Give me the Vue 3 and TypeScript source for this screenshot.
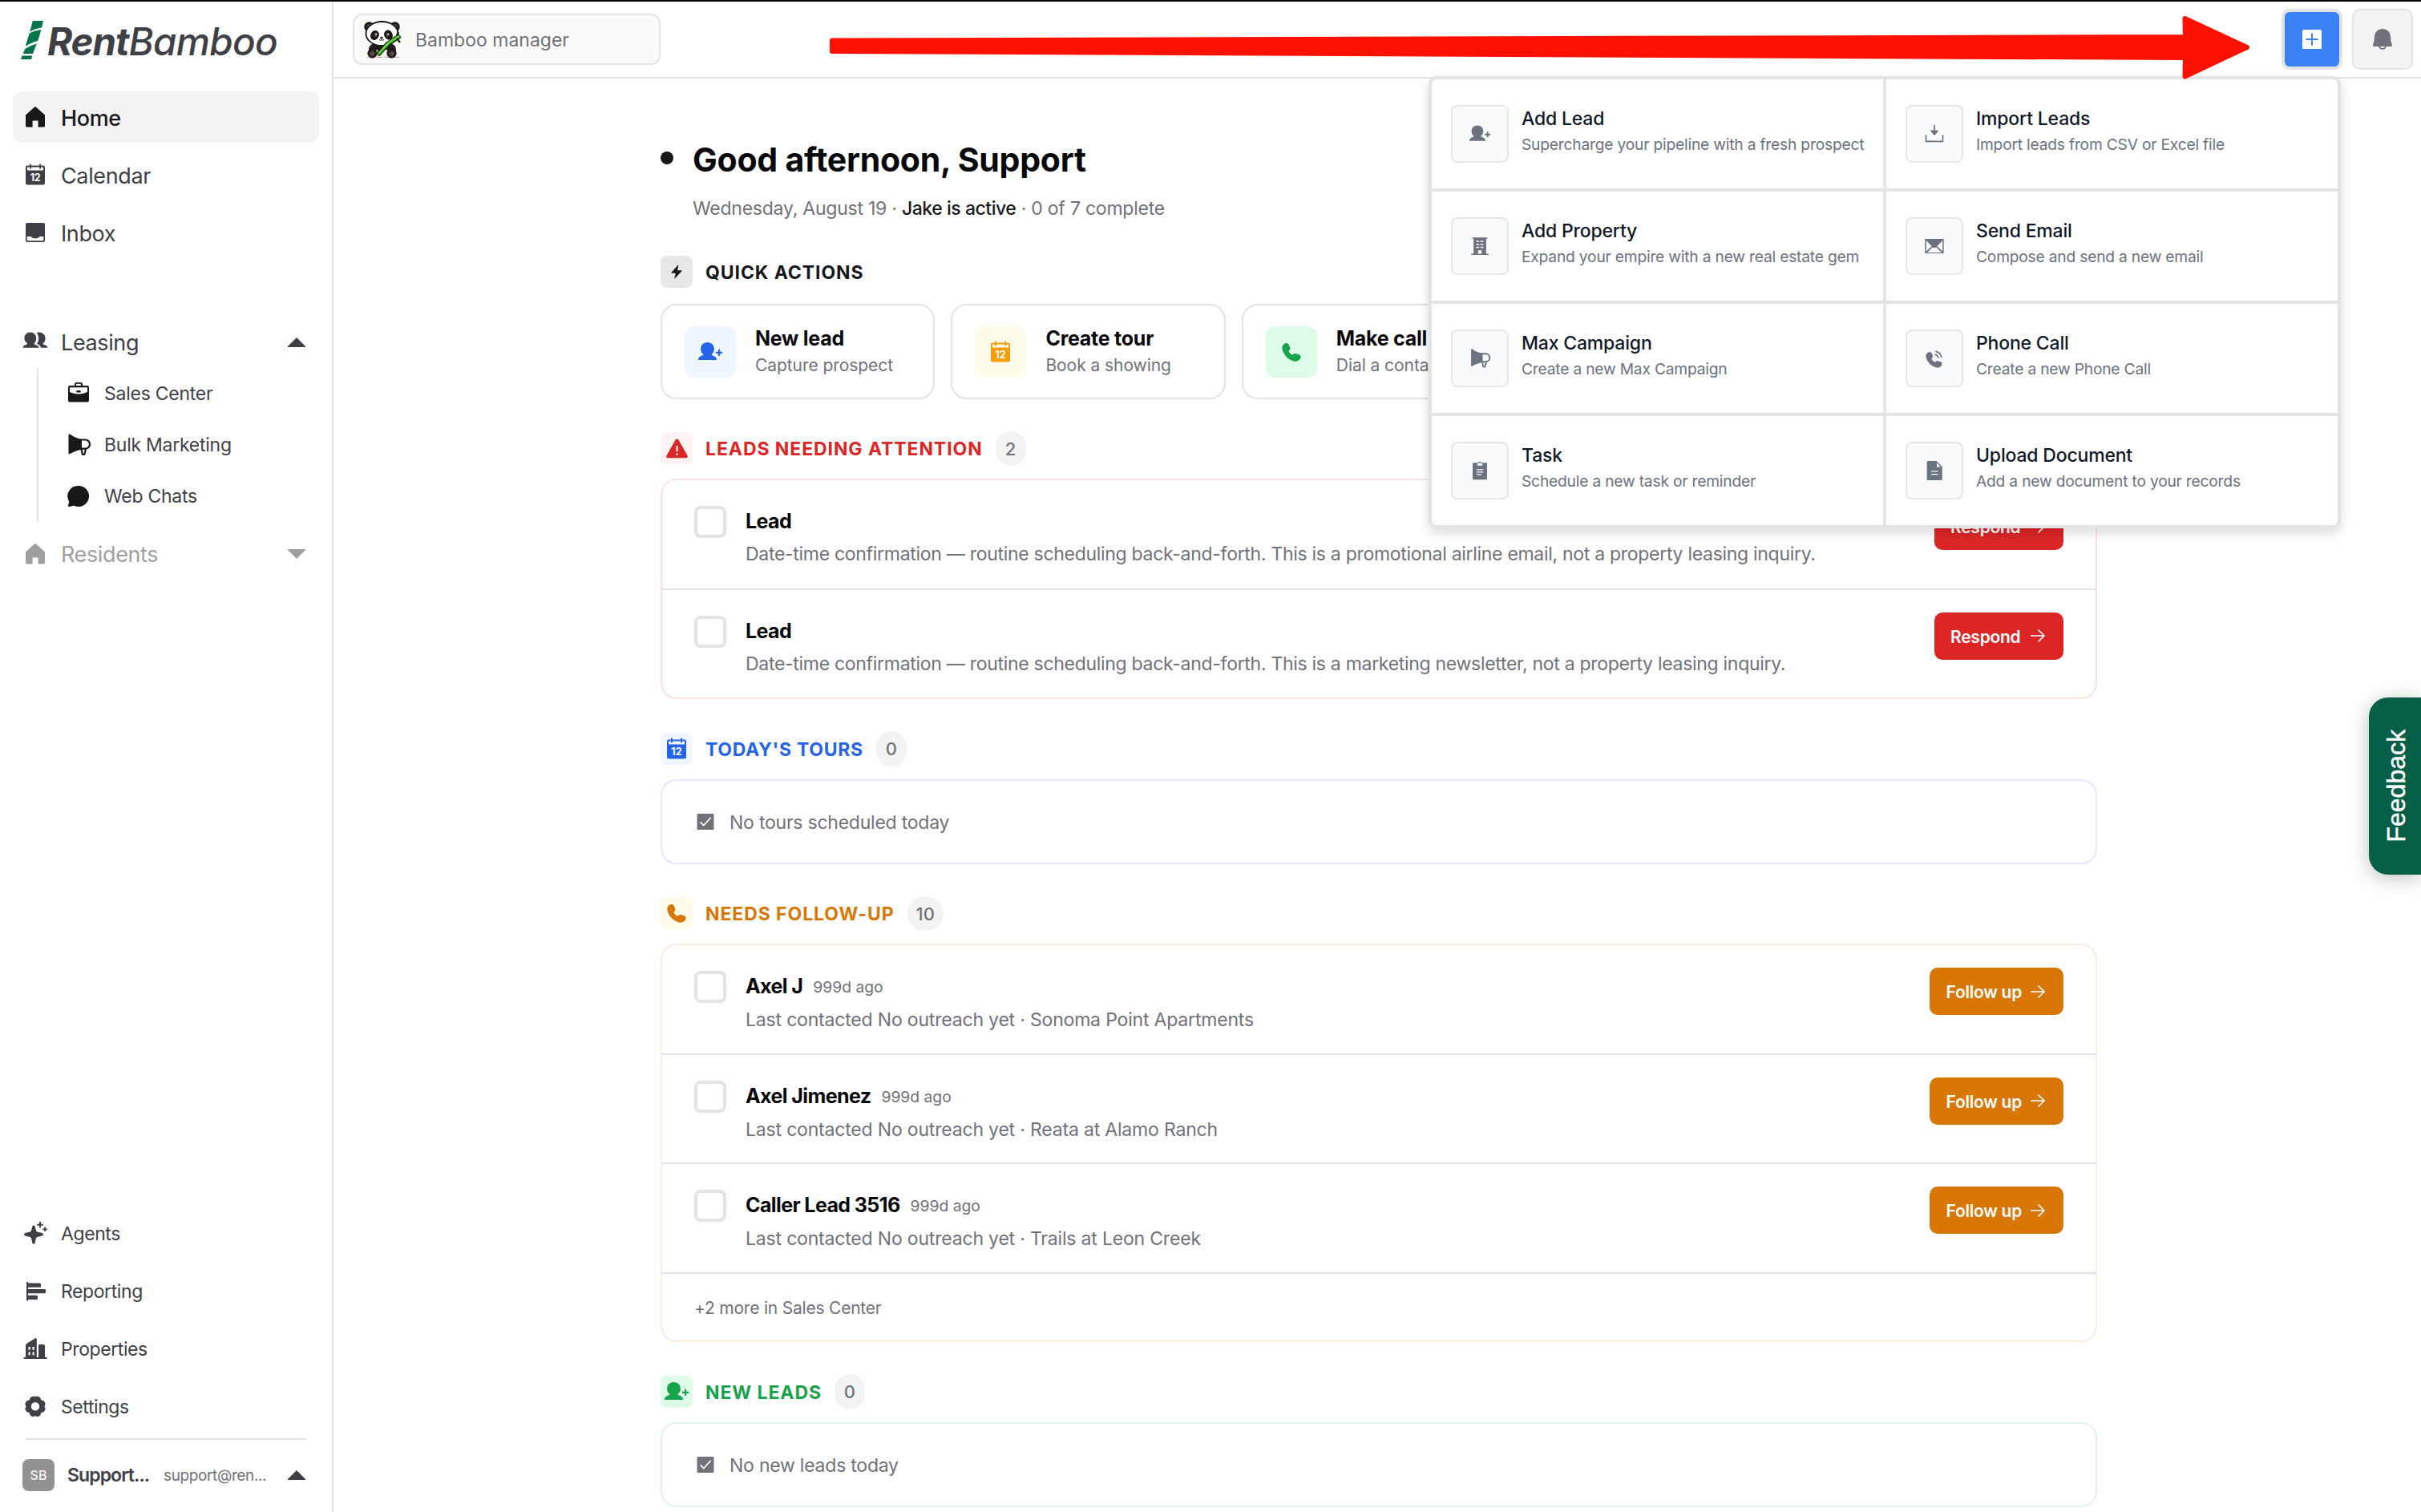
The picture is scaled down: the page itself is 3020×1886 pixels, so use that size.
<script setup lang="ts">
interface NavItem { label: string; icon: string }
interface Lead { name: string; time?: string; note: string }
interface Section {
  title: string
  icon: string
  tone: 'red' | 'blue' | 'amber' | 'green'
  count: number
  rows: Lead[]
  action?: string
  empty?: string
  more?: string
}

const phone =
  '<path d="M3 2C5 .2 8 .6 9 3.400l1.200 3C10.800 8 10.300 9 9.200 10c-.8.8-.6 1.600 0 2.400 1.100 1.500 1.800 2.200 3 2.900.8.5 1.500.2 2.100-.5.9-.9 2-1.100 3.300-.7l3.900 1.200c2.500.9 2.700 3 1.300 5.300-2 3.400-6.300 3.900-10.800 1.900C5.500 19.500 1 13 .3 7.500 0 5 1.200 3.200 3 2z"/>'

const icons: Record<string, string> = {
  home: '<path d="M14.500 4q1.500-1.300 3 0L28 13.400V27a1.600 1.600 0 0 1-1.600 1.600H19.600v-8h-7v8H5.600A1.600 1.600 0 0 1 4 27V13.400z"/>',
  calendar:
    '<path fill-rule="evenodd" d="M6 4.500h3V2.500h1.800v2h10.400v-2H23v2h3a2 2 0 0 1 2 2V26.500a2 2 0 0 1-2 2H6a2 2 0 0 1-2-2V6.500a2 2 0 0 1 2-2zM6 6.500v4h20v-4h-3v2h-1.800v-2H10.800v2H9v-2z"/><text x="16" y="24.300" text-anchor="middle" font-size="12.500" font-weight="700" fill="#fff" font-family="Inter, sans-serif">12</text>',
  inbox:
    '<path fill-rule="evenodd" d="M6 4h20a2 2 0 0 1 2 2v20a2 2 0 0 1-2 2H6a2 2 0 0 1-2-2V6a2 2 0 0 1 2-2zm-.3 17v4.500c0 .5.3.8.8.8h19c.5 0 .8-.3.8-.8V21h-5c-.8 3.200-9.800 3.200-10.600 0z"/>',
  people:
    '<path d="M9.700 3.500c4.600 0 7.500 3.300 7.500 7.600 0 3-1 4.600-2.400 6v1.400c4 1.400 5.400 2 5.700 4.300H.6c.3-2.300 1.400-2.900 5.300-4.300v-1.400c-2-1.400-3.500-3-3.500-6 0-4.300 2.700-7.600 7.300-7.600z"/><path d="M17.800 3.900c5.600-1.500 10.700 1.500 10.700 7 0 3-1 5-2.800 6.400v1.200c4 1.400 5.400 2 5.700 4.300h-8.300c-.6-2.500-2.500-3.800-5-4.800 2-3 3.500-8.500-.3-14.100z"/>',
  addperson:
    '<path d="M12.500 4c5.200 0 8.400 3.600 8.400 8.300 0 3.200-1.400 5.400-3.200 6.700v1c4.400 1.500 6 2.800 6.400 6H.9c.4-3.200 2-4.500 6.400-6v-1c-1.800-1.300-3.200-3.500-3.200-6.700C4.100 7.600 7.300 4 12.500 4z"/><path d="M26 12.800h2.100v3h3v2.100h-3v3H26v-3h-3v-2.100h3z"/>',
  briefcase:
    '<path fill-rule="evenodd" d="M11 6V4.500C11 2.800 12 2 13.500 2h5C20 2 21 2.800 21 4.500V6h6a2 2 0 0 1 2 2v16.500a2 2 0 0 1-2 2H5a2 2 0 0 1-2-2V8a2 2 0 0 1 2-2zm2 0h6V4.500q0-.7-.7-.7h-4.600q-.7 0-.7.7zM5 8.200v5.500c6 3.600 16 3.600 22 0V8.200z"/><rect x="13.200" y="12" width="5.600" height="2.400" rx="1.200"/>',
  megaphone:
    '<path d="M3.500 3.600c0-1 1-1.300 1.900-.8 4.800 3.200 9 5.200 14.600 5.900v13c-5.600.7-9.800 2.700-14.600 5.300-.9.500-1.900.2-1.900-.8z"/><path d="M19 9.500h5.400a5.600 5.600 0 0 1 0 11.200H19M19.600 21l1.100 6.200c.2 1.200 2.600 1.200 2.900 0L25 21" fill="none" stroke="currentColor" stroke-width="2.200"/>',
  chat: '<path d="M16 3a13 13 0 1 1-5.600 24.700L4 29c-1 .1-1.400-.8-1-1.500l1.200-4.800A13 13 0 0 1 16 3z"/>',
  sparkle:
    '<path d="M14 5.500c1.800 0 1.800 1.500 2.600 5 .5 2.500 1 3 3.400 3.500 4 .9 6 .9 6 2.700s-2 1.800-6 2.700c-2.400.5-2.900 1-3.400 3.400-.8 4-.8 6-2.600 6s-1.800-2-2.600-6c-.5-2.400-1-2.900-3.400-3.400-4-.9-6-.9-6-2.700s2-1.800 6-2.700c2.400-.5 2.900-1 3.400-3.500.8-3.500.8-5 2.600-5z"/><path d="M21 1h2v2.700h2.700v2H23v2.800h-2V5.700h-2.700v-2H21zM27.200 7.500h1.800v1.900h1.900v1.800H29v1.900h-1.800v-1.900h-1.900V9.400h1.900z"/>',
  bars: '<path d="M5 4h2v1.500h14.500a1.500 1.500 0 0 1 1.500 1.500v2.300a1.500 1.500 0 0 1-1.500 1.500H7v2.200h20.500A1.500 1.500 0 0 1 29 14.500v2.300a1.500 1.500 0 0 1-1.500 1.500H7v2.400h10.500a1.500 1.500 0 0 1 1.500 1.500v2.300a1.500 1.500 0 0 1-1.500 1.500H7V27.500H5z"/>',
  properties:
    '<path fill-rule="evenodd" d="M2 26h2V11.200q0-1.400 1.200-2.200L15.600 2.500q2.200-1.200 2.200 1.200V26H20V10h6q2 0 2 2v14h2.600v1.900H1.600V26zM7.500 13v3.800h2.200V13zm5 0v3.800h2.200V13zm-5 6.500v3.800h2.200v-3.800zm5 0v3.800h2.200v-3.800z"/>',
  gear: '<path fill-rule="evenodd" d="M13 2.700c1.200-.4 2 .3 3 .9 1-.6 1.800-1.300 3-.9 1.800.5 3.200 1 3.600 2.500.3 1.200.3 1.500.9 2.100s1 .5 2.200.8c1.400.4 2.100 1.800 2.700 3.600.5 1.400-.3 2.300-1 3.600.7 1.300 1.500 2.200 1 3.600-.6 1.800-1.300 3.200-2.700 3.600-1.200.3-1.600.2-2.200.8s-.6.9-.9 2.100c-.4 1.500-1.800 2-3.600 2.500-1.200.4-2-.3-3-.9-1 .6-1.800 1.300-3 .9-1.800-.5-3.200-1-3.600-2.500-.3-1.200-.3-1.500-.9-2.100s-1-.5-2.200-.8c-1.400-.4-2.100-1.800-2.700-3.600-.5-1.400.3-2.300 1-3.600-.7-1.300-1.500-2.200-1-3.600.6-1.800 1.300-3.200 2.700-3.600 1.200-.3 1.600-.2 2.200-.8s.6-.9.9-2.100c.4-1.500 1.800-2 3.600-2.500zM16 10a5.200 5.200 0 1 0 0 10.400A5.200 5.200 0 0 0 16 10z"/>',
  bolt: '<path d="M19.500 1.500 5.500 17.500q-.8 1.200.8 1.200H14L11.500 30.500 26.500 14.500q.8-1.200-.8-1.200H18z"/>',
  warn: '<path fill-rule="evenodd" d="M14 3.800c.9-1.500 3.100-1.500 4 0L30.500 26c.8 1.500 0 3-1.700 3H3.200c-1.700 0-2.500-1.500-1.700-3zM14.800 12v8h2.400v-8zm0 10.500V25h2.400v-2.500z"/>',
  phone: `<g transform="translate(4 4)">${phone}</g>`,
  phonewave: `<g transform="translate(1.500 4.200) scale(1.150)">${phone}</g><path d="M17.500 9.500c2.500.8 4.300 2.500 5 5M18.500 4.500c5 1 8.300 4.500 9.300 9.500" fill="none" stroke="currentColor" stroke-width="2.200" stroke-linecap="round"/>`,
  check:
    '<rect x="2" y="2.800" width="28" height="26.400" rx="1.500"/><path d="m7.500 16.500 5.500 5.500L25 9" fill="none" stroke="#fff" stroke-width="2.200"/>',
  building:
    '<path fill-rule="evenodd" d="M3.500 1.500h25v2H26.500V28.500H30.500v2H1.500v-2H5.500V3.500h-2zM10 7v2h4.800V7zm7 0v2h4.800V7zm-7 5v2h4.800v-2zm7 0v2h4.800v-2zm-7 5v2h4.800v-2zm7 0v2h4.800v-2zM13 23v5.500h6V23z"/>',
  task: '<path fill-rule="evenodd" d="M5.500 3h5.200C11.500 5.200 13 1 16 1s4.500 4.200 5.300 2h5.200q1.500 0 1.500 1.500v25q0 1.500-1.500 1.500h-21Q4 31 4 29.500v-25Q4 3 5.500 3zM11.500 7.500h9C20.500 4.500 18.500 3 16 3s-4.500 1.500-4.500 4.500zM10.500 13.500v1.800h11v-1.800zm0 4v1.800h11v-1.800zm0 4v1.800h8v-1.800z"/>',
  download:
    '<path d="M2 17.500V28.500h28V17.500" fill="none" stroke="currentColor" stroke-width="2.200"/><path d="M14.900 1h2.200v9h4.700q1.500.2.600 1.400L17 17.500q-1 1-2 0L9.600 11.400q-.9-1.200.6-1.400h4.700z"/>',
  mail: '<path fill-rule="evenodd" d="M.5 4h31v24h-31zM2.500 7v17.500l9-8.500zm27 0-9 9 9 8.500zM13 17.500 4 26.500h24l-9-9q-3 2.500-6 0z"/>',
  doc: '<path fill-rule="evenodd" d="M5 0H19.500l9.500 9.500V30.500q0 1.500-1.500 1.500H5Q3.500 32 3.500 30.500v-29Q3.500 0 5 0zM20 3v7h6.500zM10.500 16.200v1.800h11.500v-1.800zm0 5v1.800h11.500v-1.800z"/>',
}

const primary: NavItem[] = [
  { label: 'Home', icon: 'home' },
  { label: 'Calendar', icon: 'calendar' },
  { label: 'Inbox', icon: 'inbox' },
]
const leasing: NavItem[] = [
  { label: 'Sales Center', icon: 'briefcase' },
  { label: 'Bulk Marketing', icon: 'megaphone' },
  { label: 'Web Chats', icon: 'chat' },
]
const secondary: NavItem[] = [
  { label: 'Agents', icon: 'sparkle' },
  { label: 'Reporting', icon: 'bars' },
  { label: 'Properties', icon: 'properties' },
  { label: 'Settings', icon: 'gear' },
]
const quick = [
  { title: 'New lead', sub: 'Capture prospect', icon: 'addperson', tone: 'blue' },
  { title: 'Create tour', sub: 'Book a showing', icon: 'calendar', tone: 'yellow' },
  { title: 'Make call', sub: 'Dial a contact', icon: 'phone', tone: 'green' },
]
const menu = [
  { title: 'Add Lead', sub: 'Supercharge your pipeline with a fresh prospect', icon: 'addperson', wide: true },
  { title: 'Import Leads', sub: 'Import leads from CSV or Excel file', icon: 'download' },
  { title: 'Add Property', sub: 'Expand your empire with a new real estate gem', icon: 'building' },
  { title: 'Send Email', sub: 'Compose and send a new email', icon: 'mail' },
  { title: 'Max Campaign', sub: 'Create a new Max Campaign', icon: 'megaphone', wide: true },
  { title: 'Phone Call', sub: 'Create a new Phone Call', icon: 'phonewave' },
  { title: 'Task', sub: 'Schedule a new task or reminder', icon: 'task' },
  { title: 'Upload Document', sub: 'Add a new document to your records', icon: 'doc' },
]
const sections: Section[] = [
  {
    title: 'LEADS NEEDING ATTENTION', icon: 'warn', tone: 'red', count: 2, action: 'Respond',
    rows: [
      { name: 'Lead', note: 'Date-time confirmation — routine scheduling back-and-forth. This is a promotional airline email, not a property leasing inquiry.' },
      { name: 'Lead', note: 'Date-time confirmation — routine scheduling back-and-forth. This is a marketing newsletter, not a property leasing inquiry.' },
    ],
  },
  { title: "TODAY'S TOURS", icon: 'calendar', tone: 'blue', count: 0, rows: [], empty: 'No tours scheduled today' },
  {
    title: 'NEEDS FOLLOW-UP', icon: 'phone', tone: 'amber', count: 10, action: 'Follow up', more: '+2 more in Sales Center',
    rows: [
      { name: 'Axel J', time: '999d ago', note: 'Last contacted No outreach yet · Sonoma Point Apartments' },
      { name: 'Axel Jimenez', time: '999d ago', note: 'Last contacted No outreach yet · Reata at Alamo Ranch' },
      { name: 'Caller Lead 3516', time: '999d ago', note: 'Last contacted No outreach yet · Trails at Leon Creek' },
    ],
  },
  { title: 'NEW LEADS', icon: 'addperson', tone: 'green', count: 0, rows: [], empty: 'No new leads today' },
]
</script>

<template>
  <div class="app">
    <aside class="sidebar">
      <div class="logo">
        <svg class="stalk" viewBox="0 0 28 48">
          <path d="M14.800 0H28L26 8.500Q18 9.500 11.300 13.700z" />
          <path d="M10.600 15.800Q17 12 25.300 11L21.300 25Q12 27.500 5.600 31.800z" />
          <path d="M5.200 35Q12 30.500 19.800 28.500L15 41H2.800z" />
          <path d="M1.500 43.500h12.700L13 48H0z" />
        </svg>
        <span class="wordmark"><b>Rent</b><span>Bamboo</span></span>
      </div>

      <nav class="nav">
        <a v-for="(n, i) in primary" :key="n.label" class="item" :class="{ active: i === 0 }">
          <svg class="ico32" viewBox="0 0 32 32" v-html="icons[n.icon]" /><span class="label">{{ n.label }}</span>
        </a>
      </nav>

      <nav class="nav group">
        <a class="item">
          <svg class="ico32" viewBox="0 0 32 32" v-html="icons.people" /><span>Leasing</span>
          <svg class="chev" viewBox="0 0 22 12"><path d="M11 0 22 11V12H0V11z" /></svg>
        </a>
        <div class="sub">
          <a v-for="n in leasing" :key="n.label" class="subitem">
            <svg class="ico32" viewBox="0 0 32 32" v-html="icons[n.icon]" />{{ n.label }}
          </a>
        </div>
        <a class="item muted">
          <svg class="ico32" viewBox="0 0 32 32" v-html="icons.home" /><span>Residents</span>
          <svg class="chev" viewBox="0 0 22 12"><path d="M11 12 0 1V0H22V1z" /></svg>
        </a>
      </nav>

      <nav class="nav bottom">
        <a v-for="n in secondary" :key="n.label" class="item small">
          <svg class="ico32" viewBox="0 0 32 32" v-html="icons[n.icon]" />{{ n.label }}
        </a>
      </nav>
      <div class="user">
        <span class="avatar">SB</span>
        <span class="uname">Support...</span>
        <span class="email">support@ren...</span>
        <svg class="chev" viewBox="0 0 22 12"><path d="M11 0 22 11V12H0V11z" /></svg>
      </div>
    </aside>

    <div class="page">
      <header class="topbar">
        <div class="manager">
          <svg class="panda" viewBox="0 0 48 48">
            <path d="M4 46.500h40" stroke="#c9a9a4" stroke-width="1" stroke-dasharray="8 3" />
            <circle cx="6.500" cy="8.500" r="6.200" fill="#1c1715" /><circle cx="38.500" cy="8.500" r="6.200" fill="#1c1715" />
            <circle cx="6.500" cy="8.500" r="3.400" fill="#4b403d" /><circle cx="38.500" cy="8.500" r="3.400" fill="#4b403d" />
            <path d="M6 37c0-7 6-9 17-9s17 2 17 9l-1 9H7z" fill="#241d1b" />
            <path d="M15 37h14l2 9H14z" fill="#f4f1ee" />
            <path d="M20 3l2.500-2.500L24 2l2-.5-1 2.500z" fill="#1c1715" />
            <ellipse cx="22.500" cy="17" rx="20" ry="15" fill="#fff" stroke="#1c1715" stroke-width="1.800" />
            <ellipse cx="13.500" cy="19" rx="5.200" ry="6.200" transform="rotate(30 13.500 19)" fill="#1c1715" />
            <ellipse cx="30.500" cy="18.500" rx="5.200" ry="6.200" transform="rotate(-30 30.500 18.500)" fill="#1c1715" />
            <circle cx="14.500" cy="18.500" r="2.300" fill="#4a4645" /><circle cx="29.500" cy="18.500" r="2.300" fill="#4a4645" />
            <circle cx="15.200" cy="17.500" r="1" fill="#fff" /><circle cx="30.200" cy="17.500" r="1" fill="#fff" />
            <ellipse cx="22" cy="22.300" rx="1.900" ry="1.200" fill="#1c1715" />
            <path d="M19 24.500q1.500 1.700 3 0 1.500 1.700 3 0" fill="none" stroke="#1c1715" />
            <circle cx="10.500" cy="41.500" r="5.600" fill="#2b2321" stroke="#110d0c" /><circle cx="34.500" cy="41.500" r="5.600" fill="#2b2321" stroke="#110d0c" />
            <circle cx="10.500" cy="42" r="2.800" fill="#5a4d49" /><circle cx="34.500" cy="42" r="2.800" fill="#5a4d49" />
            <path d="M17 43.500 30 29.500 45 19.500" fill="none" stroke="#14240f" stroke-width="6" />
            <path d="M17.500 43 30.500 29 44.500 19.800" fill="none" stroke="#3fae2c" stroke-width="3.600" />
            <path d="M19 40.500 31 28 43 20" fill="none" stroke="#8be04f" stroke-width="1.200" />
            <path d="M41 23l4 5M41 19l2-4" stroke="#14240f" stroke-width="2.400" />
            <path d="M13 34q5-2 10 1l-4 4q-4-3-7-2z" fill="#1c1715" />
          </svg>
          <span class="label">Bamboo manager</span>
        </div>
        <div class="tools">
          <button class="add">
            <svg viewBox="0 0 24 24"><rect width="24" height="24" rx="1.500" fill="#fff" /><path d="M4.500 12h15M12 4.500v15" stroke="#3b82f6" stroke-width="2" /></svg>
          </button>
          <button class="bell">
            <svg viewBox="0 0 24 26">
              <path d="M12 0C6.500 0 2.500 3.800 2 9.500L1.600 15 0 20q-.2 2 1.500 2h21q1.700 0 1.500-2l-1.600-5L22 9.500C21.500 3.800 17.500 0 12 0z" />
              <path d="M8 22q.8 3 4 3t4-3" fill="none" stroke="currentColor" stroke-width="1.600" />
            </svg>
          </button>
        </div>
      </header>

      <main class="content">
        <div class="greeting">
          <span class="dot" />
          <div>
            <h1>Good afternoon, Support</h1>
            <p>Wednesday, August 19 · <strong>Jake is active</strong> · 0 of 7 complete</p>
          </div>
        </div>

        <div class="head quickhead">
          <span class="badge dark"><svg class="ico" viewBox="0 0 32 32" v-html="icons.bolt" /></span>
          <h2>QUICK ACTIONS</h2>
        </div>
        <div class="quick">
          <div v-for="q in quick" :key="q.title" class="qcard">
            <span class="qicon" :class="'q-' + q.tone"><svg class="ico32" viewBox="0 0 32 32" v-html="icons[q.icon]" /></span>
            <div><h3>{{ q.title }}</h3><p>{{ q.sub }}</p></div>
          </div>
        </div>

        <section v-for="s in sections" :key="s.title" :class="s.tone">
          <div class="head">
            <span class="badge"><svg :class="s.icon === 'warn' ? 'ico28' : 'ico32'" viewBox="0 0 32 32" v-html="icons[s.icon]" /></span>
            <h2>{{ s.title }}</h2>
            <span class="count">{{ s.count }}</span>
          </div>
          <div class="card">
            <div v-for="(r, i) in s.rows" :key="i" class="row">
              <span class="box" />
              <div class="text">
                <h3>{{ r.name }}<small v-if="r.time">{{ r.time }}</small></h3>
                <p>{{ r.note }}</p>
              </div>
              <button class="cta">
                <span class="label">{{ s.action }}</span>
                <svg viewBox="0 0 20 18"><path d="M1 9h17M10.500 1.500 18 9l-7.500 7.500" fill="none" stroke="currentColor" stroke-width="1.600" /></svg>
              </button>
            </div>
            <div v-if="s.more" class="more">{{ s.more }}</div>
            <div v-if="s.empty" class="empty"><svg viewBox="0 0 32 32" v-html="icons.check" /><span class="label">{{ s.empty }}</span></div>
          </div>
        </section>
      </main>
    </div>

    <div class="menu">
      <div v-for="m in menu" :key="m.title" class="cell">
        <span class="micon"><svg :class="{ wide: m.wide }" viewBox="0 0 32 32" v-html="icons[m.icon]" /></span>
        <div><h4>{{ m.title }}</h4><p>{{ m.sub }}</p></div>
      </div>
    </div>

    <div class="feedback"><span>Feedback</span></div>

    <svg class="arrow" viewBox="0 0 1780 84">
      <path d="M6 35.500 1694 31 1693.500 8 1771 44 1693.500 80.500 1694 57 6 49z" stroke-width="6" stroke-linejoin="round" />
    </svg>
  </div>
</template>

<style>
html, body { background: #fff; overflow: hidden; }
</style>
<style scoped>
* { box-sizing: border-box; }
h1, h2, h3, h4, p { margin: 0; }
svg { display: block; flex: none; fill: currentColor; }
button { font: inherit; border: 0; padding: 0; }
.app {
  position: relative; display: flex; width: 3020px; height: 1886px; overflow: hidden;
  border-top: 2px solid #000; background: #fff; color: #3f3f46;
  font-family: Inter, "Liberation Sans", sans-serif; font-size: 23px;
}
.ico { width: 20px; height: 24px; }
.ico28 { width: 29px; height: 29px; }
.ico32 { width: 32px; height: 32px; }
.label { padding-top: 2px; }

.sidebar { width: 416px; flex: none; display: flex; flex-direction: column; border-right: 2px solid #e4e4e7; }
.logo { display: flex; height: 112px; padding: 24px 0 0 26px; }
.stalk { width: 28px; height: 48px; fill: #05744a; }
.wordmark { margin-left: 5px; font-size: 47.500px; line-height: 51px; font-style: italic; color: #3f3f46; }
.wordmark b { font-weight: 700; letter-spacing: -0.022em; }
.wordmark span { font-weight: 500; letter-spacing: -0.014em; }
.nav { display: flex; flex-direction: column; gap: 8px; padding: 0 16px; }
.item {
  display: flex; align-items: center; gap: 16px; height: 64px; padding: 0 17px 0 12px;
  border-radius: 12px; font-size: 27px; letter-spacing: -0.014em;
}
.item.active { background: #f3f3f3; color: #18181b; font-weight: 500; }
.item.muted { color: #9f9fa0; }
.item.small { font-size: 23px; letter-spacing: -0.018em; }
.chev { width: 22px; height: 12px; margin-left: auto; }
.group { margin-top: 73px; gap: 0; }
.sub { margin: 0 0 8px 30px; padding-left: 34px; border-left: 2px solid #e4e4e7; }
.subitem { display: flex; align-items: center; gap: 16px; height: 64px; letter-spacing: -0.011em; }
.subitem .ico32 { color: #18181b; }
.bottom { margin-top: auto; }
.user {
  display: flex; align-items: center; height: 92px; margin: 7px 32px 0; padding-bottom: 2px;
  border-top: 2px solid #e4e4e7;
}
.avatar {
  width: 40px; height: 40px; margin-left: -4px; border-radius: 8px; background: #929292; color: #f4f4f5;
  font-size: 16px; line-height: 40px; text-align: center; font-weight: 500;
}
.uname { width: 120px; margin-left: 16px; font-weight: 600; letter-spacing: -0.04em; white-space: nowrap; }
.email { font-size: 19px; letter-spacing: -0.02em; color: #71717a; }
.user .chev { margin-right: 1px; }

.page { flex: 1; min-width: 0; display: flex; flex-direction: column; }
.topbar {
  display: flex; align-items: center; justify-content: space-between; height: 96px; flex: none;
  padding: 0 10px 0 24px; border-bottom: 2px solid #e4e4e7;
}
.manager {
  display: flex; align-items: center; gap: 16px; width: 384px; height: 64px; padding-left: 12px;
  border: 2px solid #e4e4e7; border-radius: 12px; background: #fafaf9; color: #71717a;
}
.panda { width: 48px; height: 48px; fill: none; }
.tools { display: flex; gap: 12px; }
.add, .bell { display: flex; align-items: center; justify-content: center; width: 76px; height: 76px; border-radius: 10px; }
.add { background: #3b82f6; border: 4px solid #e4e4e7; }
.add svg { width: 24px; height: 24px; }
.bell { background: #f3f3f3; border: 2px solid #e4e4e4; color: #71717a; }
.bell svg { width: 24px; height: 26px; }

.content { width: 1792px; margin: 0 0 0 408px; }
.greeting { display: flex; padding-top: 75px; height: 221px; }
.dot { width: 16px; height: 16px; margin: 16px 24px 0 0; border-radius: 50%; background: #18181b; }
.greeting h1 { font-size: 41px; line-height: 52px; font-weight: 700; letter-spacing: -0.006em; color: #09090b; }
.greeting p { margin-top: 17px; line-height: 36px; color: #71717a; letter-spacing: -0.010em; }
.greeting strong { font-weight: 500; color: #18181b; letter-spacing: -0.02em; }
.head { display: flex; align-items: center; gap: 16px; height: 43.5px; }
.quickhead { height: 40px; }
.head h2 { padding-top: 2px; font-size: 23px; font-weight: 700; letter-spacing: 0.040em; color: #18181b; }
.badge { display: flex; align-items: center; justify-content: center; width: 40px; height: 40px; border-radius: 8px; }
.badge.dark { background: #e8e8e8; color: #18181b; }
.count {
  min-width: 38px; height: 43.5px; padding: 0 11px; border-radius: 22px; background: #f3f3f3;
  font-size: 22px; line-height: 45px; font-weight: 500; text-align: center; color: #71717a;
}
.quick { display: grid; grid-template-columns: repeat(5, 1fr); gap: 20px; margin-top: 20px; }
.qcard {
  display: flex; align-items: center; gap: 24px; height: 119px; padding: 0 0 0 28px;
  border: 2px solid #e4e4e7; border-radius: 20px; white-space: nowrap;
}
.qicon { display: flex; align-items: center; justify-content: center; width: 64px; height: 64px; border-radius: 12px; }
.q-blue { background: #eff6ff; color: #2563eb; }
.q-yellow { background: #fffbeb; color: #f59e0b; }
.q-green { background: #dcfce7; color: #16a34a; }
.qcard h3 { font-size: 25px; line-height: 34px; font-weight: 700; color: #09090b; letter-spacing: -0.010em; }
.qcard p { font-size: 21px; line-height: 34px; color: #71717a; letter-spacing: -0.003em; }
section { margin-top: 40px; }
.quick + section { margin-top: 39.5px; }
.card { margin-top: 16px; border: 2px solid #eee; border-radius: 20px; }
.red .card { border-color: #fee2e2; }
.blue .card { border-color: #e3e8fd; }
.amber .card { border-color: #fdecdc; }
.green .card { border-color: #e2f3e9; }
.red .badge { background: #fef2f2; }
.blue .badge { background: #eff6ff; }
.amber .badge { background: #fffbeb; }
.green .badge { background: #dcfce7; }
.red h2, .red .badge { color: #dc2626; }
.blue h2, .blue .badge { color: #2563eb; }
.amber h2, .amber .badge { color: #d97706; }
.green h2, .green .badge { color: #16a34a; }
.blue .head h2 { letter-spacing: 0.030em; }
.row h3, .row .cta { color: #09090b; }
.row { display: flex; height: 136.5px; padding: 28px 40px 0; border-bottom: 2px solid #e4e4e7; }
.red .row:last-child { height: 134.5px; border-bottom: 0; }
.box { width: 40px; height: 40px; flex: none; margin-top: 4px; border: 4px solid #e4e4e4; border-radius: 8px; }
.text { flex: 1; margin-left: 24px; padding-top: 1px; white-space: nowrap; }
.text h3 { font-size: 25px; line-height: 44px; font-weight: 700; letter-spacing: -0.024em; }
.text small { margin-left: 13px; font-size: 19.300px; font-weight: 400; color: #71717a; letter-spacing: 0; vertical-align: 1px; }
.text p { line-height: 38px; color: #71717a; letter-spacing: -0.0128em; }
.amber .text p { letter-spacing: -0.008em; }
.row .cta {
  display: flex; align-items: center; justify-content: space-between; height: 59px; min-width: 161px; gap: 10px;
  padding: 0 22px 0 20px; border-radius: 10px; color: #fff; font-size: 21px; font-weight: 600;
  letter-spacing: -0.012em; white-space: nowrap;
}
.cta svg { width: 20px; height: 18px; }
.red .cta { background: #dc2626; }
.amber .cta { background: #d97706; }
.more { height: 83.500px; padding: 0 40px; font-size: 21px; line-height: 85px; color: #71717a; letter-spacing: -0.010em; }
.empty { display: flex; align-items: center; gap: 17px; height: 102px; padding-left: 41px; color: #71717a; letter-spacing: -0.010em; }
.empty svg { width: 26px; height: 24px; }

.menu {
  position: absolute; left: 1782px; top: 93px; width: 1138px; padding: 4px; display: grid;
  grid-template-columns: 1fr 1fr; grid-auto-rows: 136px; gap: 4px; background: #e4e4e7; border-radius: 10px;
  box-shadow: 0 6px 14px rgba(0, 0, 0, 0.14);
}
.cell { display: flex; gap: 16px; padding: 32px 0 0 24px; background: #fff; white-space: nowrap; }
.cell:first-child { border-top-left-radius: 6px; }
.cell:nth-child(2) { border-top-right-radius: 6px; }
.cell:nth-child(7) { border-bottom-left-radius: 6px; }
.cell:nth-child(8) { border-bottom-right-radius: 6px; }
.micon {
  display: flex; align-items: center; justify-content: center; width: 72px; height: 72px; flex: none;
  border: 2px solid #e5e7eb; border-radius: 8px; background: #f9fafb; color: #6b7280;
}
.micon svg { width: 24px; height: 24px; }
.micon svg.wide { width: 28px; height: 28px; }
.cell h4 { font-size: 23px; line-height: 34px; font-weight: 500; color: #111827; letter-spacing: -0.008em; }
.cell p { font-size: 19.200px; line-height: 30px; color: #6b7280; letter-spacing: -0.010em; }

.feedback {
  position: absolute; right: 0; top: 868px; width: 65px; height: 221px; display: flex; align-items: center;
  justify-content: center; padding-left: 2px; border-radius: 24px 0 0 24px; background: #065f46; color: #fff;
  box-shadow: 0 4px 24px rgba(0, 0, 0, 0.25);
}
.feedback span {
  writing-mode: vertical-rl; transform: rotate(180deg); font-family: "Liberation Sans", sans-serif;
  font-size: 32px; line-height: 36px; -webkit-text-stroke: 0.5px #fff;
}
.arrow { position: absolute; left: 1032px; top: 13px; width: 1780px; height: 84px; fill: #ff1100; stroke: #ff1100; }
</style>
